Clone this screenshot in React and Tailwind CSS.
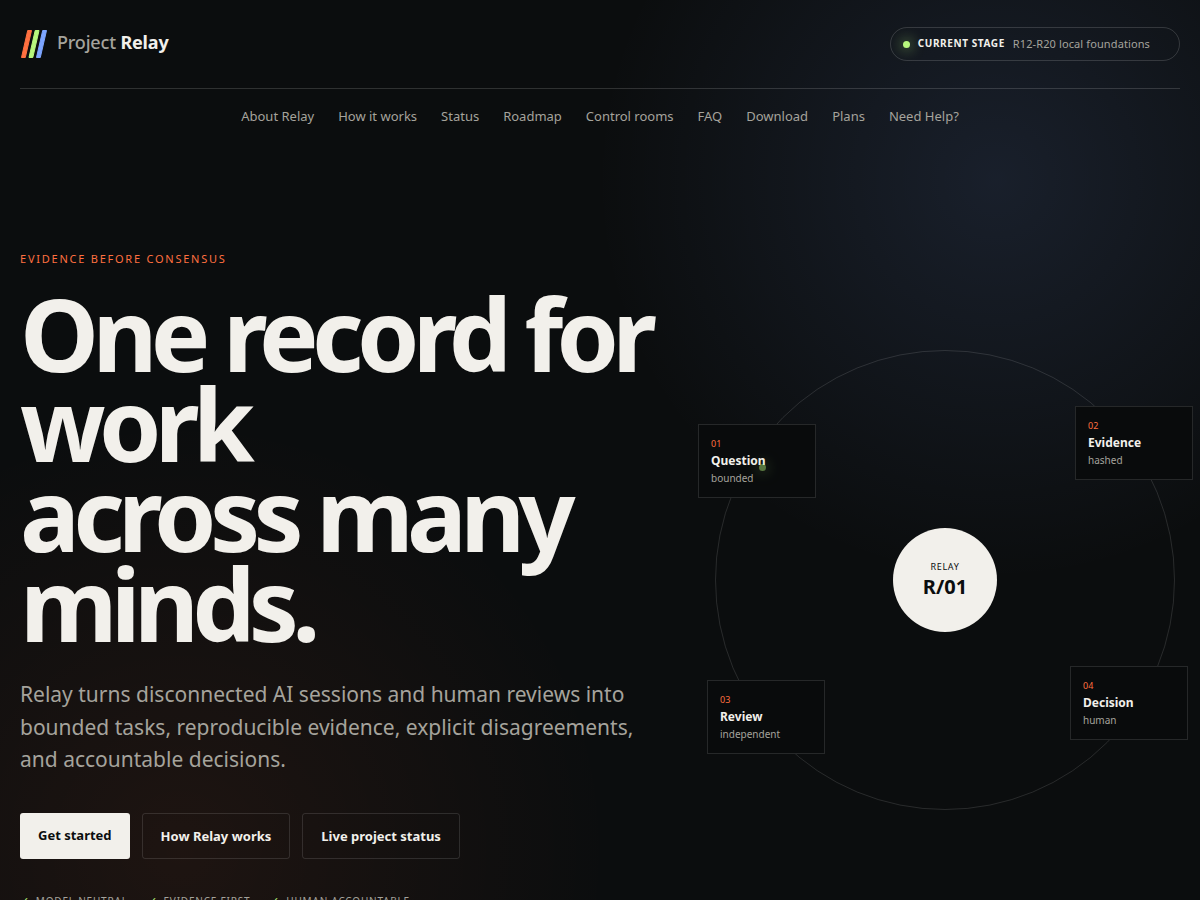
const NAV_LINKS = [
  { label: 'About Relay', href: '#about' },
  { label: 'How it works', href: '#how' },
  { label: 'Status', href: '#status' },
  { label: 'Roadmap', href: '#roadmap' },
  { label: 'Control rooms', href: '#rooms' },
  { label: 'FAQ', href: '#faq' },
  { label: 'Download', href: '#download' },
  { label: 'Plans', href: '#plans' },
  { label: 'Need Help?', href: '#help' },
]

const NODES = [
  { id: '01', title: 'Question', note: 'bounded', place: '-left-[18px] top-[73px]' },
  { id: '02', title: 'Evidence', note: 'hashed', place: '-right-[19px] top-[55px]' },
  { id: '03', title: 'Review', note: 'independent', place: '-left-[9px] bottom-[55px]' },
  { id: '04', title: 'Decision', note: 'human', place: '-right-[14px] bottom-[69px]' },
]

const PRINCIPLES = ['Model neutral', 'Evidence first', 'Human accountable']

export default function App() {
  return (
    <div className="min-h-screen overflow-x-hidden bg-[#0b0d0e] bg-[radial-gradient(circle_at_83%_180px,rgba(125,165,255,0.12),transparent_400px),radial-gradient(circle_at_15%_850px,rgba(255,107,53,0.08),transparent_430px)] px-5 font-['Noto_Sans',sans-serif] text-[#f2f0eb]">
      <Header />
      <main className="grid grid-cols-[minmax(0,1fr)_460px] items-center gap-[55px] pt-[104px] pr-[5px] pb-16">
        <Hero />
        <Orbit />
      </main>
    </div>
  )
}

function Header() {
  return (
    <header>
      <div className="flex h-[89px] items-center justify-between border-b border-white/15">
        <a href="#top" className="flex items-center gap-[9px] text-lg font-medium tracking-[-0.01em] text-[#a5a39c]">
          <Logo />
          <span className="pb-1">
            Project <strong className="font-bold text-[#f2f0eb]">Relay</strong>
          </span>
        </a>
        <div className="flex h-[34px] items-center gap-2 rounded-full border border-white/15 pr-[29px] pl-3 text-[11px] text-[#a5a39c]">
          <span className="size-[7px] rounded-full bg-[#b7f77d] shadow-[0_0_14px_#b7f77d]" />
          <strong className="pb-0.5 text-[10px] font-bold tracking-[0.06em] text-[#f2f0eb] uppercase">Current stage</strong>
          <span className="tracking-[0.01em]">R12-R20 local foundations</span>
        </div>
      </div>
      <nav aria-label="Main" className="flex h-14 items-center justify-center gap-6 text-[13px] text-[#a5a39c]">
        {NAV_LINKS.map((link) => (
          <a key={link.href} href={link.href} className="hover:text-white">
            {link.label}
          </a>
        ))}
      </nav>
    </header>
  )
}

function Logo() {
  return (
    <svg width="28" height="30" viewBox="0 0 28 30" aria-hidden="true">
      <g strokeWidth="1" strokeLinejoin="round">
        <path d="M7.7 1.5h3.8L5.3 28.5H1.5z" fill="#ff7040" stroke="#ff7040" />
        <path d="M15.2 1.5H19L12.8 28.5H9z" fill="#b7f77d" stroke="#b7f77d" />
        <path d="M22.7 1.5h3.8L20.3 28.5h-3.8z" fill="#7da5ff" stroke="#7da5ff" />
      </g>
    </svg>
  )
}

function Hero() {
  return (
    <section>
      <p className="text-[11px] leading-5 tracking-[0.16em] text-[#ff7040] uppercase">Evidence before consensus</p>
      <h1 className="mt-[19px] text-[100px] leading-[0.9] font-bold tracking-[-0.067em]">
        One record for work
        <br />
        across many minds.
      </h1>
      <p className="mt-[30px] max-w-[640px] text-[21px] leading-[1.55] text-[#a5a39c]">
        Relay turns disconnected AI sessions and human reviews into bounded tasks, reproducible evidence, explicit
        disagreements, and accountable decisions.
      </p>
      <div className="mt-[37px] flex gap-3 text-[13px] font-bold">
        <a href="#start" className="flex h-[46px] items-center rounded-[3px] bg-[#f2f0eb] px-[18px] text-[#0b0d0e]">
          Get started
        </a>
        <a href="#how" className="flex h-[46px] items-center rounded-[3px] border border-white/12 px-[18px] pt-0.5">
          How Relay works
        </a>
        <a href="#status" className="flex h-[46px] items-center rounded-[3px] border border-white/12 px-[18px] pt-0.5">
          Live project status
        </a>
      </div>
      <ul className="mt-8 flex gap-5 text-[10px] leading-5 tracking-[0.08em] text-[#a5a39c] uppercase">
        {PRINCIPLES.map((item) => (
          <li key={item} className="flex gap-1.5">
            <span className="text-[11px] text-[#b7f77d]">✓</span>
            {item}
          </li>
        ))}
      </ul>
    </section>
  )
}

function Orbit() {
  return (
    <section aria-label="Relay cycle" className="relative grid aspect-square place-items-center rounded-full border border-white/12">
      <div className="flex size-[104px] flex-col items-center justify-center rounded-full bg-[#f2f0eb] pb-0.5 text-[#0b0d0e]">
        <span className="text-[9px] leading-4 tracking-[0.08em]">RELAY</span>
        <strong className="text-xl leading-6 font-bold">R/01</strong>
      </div>
      {NODES.map((node) => (
        <OrbitNode key={node.id} {...node} />
      ))}
      <span className="absolute top-[113px] left-[43px] size-[7px] rounded-full bg-[#b7f77d] opacity-45 shadow-[0_0_14px_#b7f77d]" />
    </section>
  )
}

function OrbitNode({ id, title, note, place }) {
  return (
    <div className={`absolute flex h-[74px] w-[118px] flex-col justify-center border border-white/12 bg-[#090b0c] px-3 ${place}`}>
      <span className="text-[9px] leading-4 text-[#ff7040]">{id}</span>
      <strong className="text-xs leading-[18px] font-bold">{title}</strong>
      <span className="text-[10px] leading-4 text-[#a5a39c]">{note}</span>
    </div>
  )
}
